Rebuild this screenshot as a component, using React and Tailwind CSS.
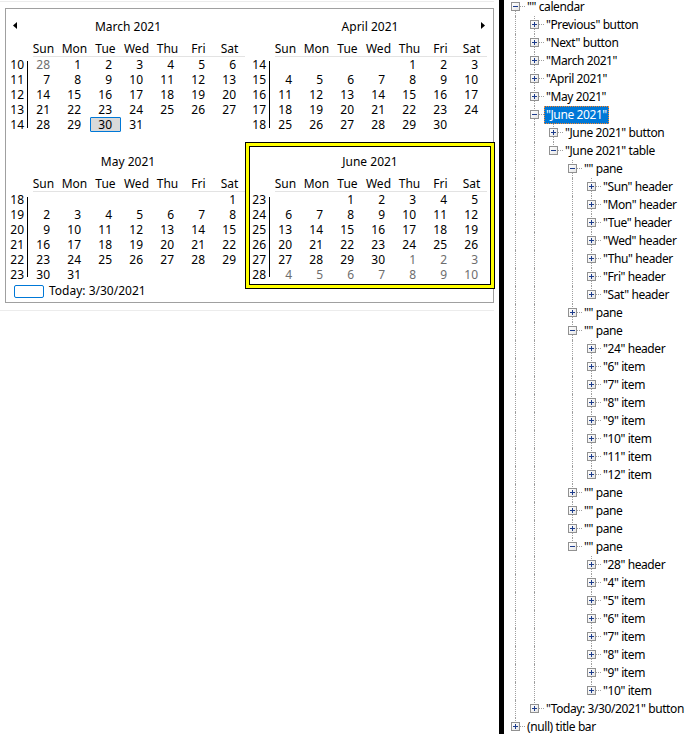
import React from "react";

// calendar data: [weekNo, [day, grey?, selected?]...]
const march = [
  [10, [[28, 1], [1], [2], [3], [4], [5], [6]]],
  [11, [[7], [8], [9], [10], [11], [12], [13]]],
  [12, [[14], [15], [16], [17], [18], [19], [20]]],
  [13, [[21], [22], [23], [24], [25], [26], [27]]],
  [14, [[28], [29], [30, 0, 1], [31], [], [], []]],
];
const april = [
  [14, [[], [], [], [], [1], [2], [3]]],
  [15, [[4], [5], [6], [7], [8], [9], [10]]],
  [16, [[11], [12], [13], [14], [15], [16], [17]]],
  [17, [[18], [19], [20], [21], [22], [23], [24]]],
  [18, [[25], [26], [27], [28], [29], [30], []]],
];
const may = [
  [18, [[], [], [], [], [], [], [1]]],
  [19, [[2], [3], [4], [5], [6], [7], [8]]],
  [20, [[9], [10], [11], [12], [13], [14], [15]]],
  [21, [[16], [17], [18], [19], [20], [21], [22]]],
  [22, [[23], [24], [25], [26], [27], [28], [29]]],
  [23, [[30], [31], [], [], [], [], []]],
];
const june = [
  [23, [[], [], [1], [2], [3], [4], [5]]],
  [24, [[6], [7], [8], [9], [10], [11], [12]]],
  [25, [[13], [14], [15], [16], [17], [18], [19]]],
  [26, [[20], [21], [22], [23], [24], [25], [26]]],
  [27, [[27], [28], [29], [30], [1, 1], [2, 1], [3, 1]]],
  [28, [[4, 1], [5, 1], [6, 1], [7, 1], [8, 1], [9, 1], [10, 1]]],
];
const dayNames = ["Sun", "Mon", "Tue", "Wed", "Thu", "Fri", "Sat"];

const LeftArrow = () => (
  <svg width="4" height="7" viewBox="0 0 4 7" className="-mt-[3px]">
    <polygon points="4,0 4,7 0,3.5" fill="#000" />
  </svg>
);
const RightArrow = () => (
  <svg width="4" height="7" viewBox="0 0 4 7" className="-mt-[3px]">
    <polygon points="0,0 0,7 4,3.5" fill="#000" />
  </svg>
);

const Month = ({ title, weeks, left, right }) => (
  <div className="w-[237px] flex flex-col">
    <div className="grid grid-cols-[1fr_auto_1fr] items-center h-[30px]">
      <div className="justify-self-start pl-[5px] flex">{left && <LeftArrow />}</div>
      <div className="pl-[3px]">{title}</div>
      <div className="justify-self-end pr-[2px] flex">{right && <RightArrow />}</div>
    </div>
    <div className="ml-[20px] h-[14px] leading-[14px] grid grid-cols-[repeat(7,31px)]">
      {dayNames.map((d) => (
        <div key={d} className="text-center">
          {d}
        </div>
      ))}
    </div>
    <div className="ml-[25px] h-px bg-[#e3e3e3]" />
    <div className="flex h-[90px]">
      <div className="w-[19px] flex flex-col text-right pr-[3px]">
        {weeks.map(([w]) => (
          <div key={w} className="h-[15px] leading-[15px]">
            {w}
          </div>
        ))}
      </div>
      <div
        className={
          weeks.length > 5
            ? "w-px bg-black self-start mt-[5px] h-[80px]"
            : "w-px bg-black self-start mt-[4px] h-[67px]"
        }
      />
      <div className="flex flex-col">
        {weeks.map(([w, days]) => (
          <div key={w} className="grid grid-cols-[repeat(7,31px)] h-[15px] leading-[15px]">
            {days.map(([n, grey, sel], i) => (
              <div
                key={i}
                className={
                  sel
                    ? "text-right pr-[8px] border border-[#0078d7] bg-[#d9d9d9] leading-[13px] rounded-[1px]"
                    : grey
                    ? "text-right pr-[9px] text-[#6d6d6d]"
                    : "text-right pr-[9px]"
                }
              >
                {n}
              </div>
            ))}
          </div>
        ))}
      </div>
    </div>
  </div>
);

const Calendar = () => (
  <div className="relative w-[489px] border border-[#a0a0a0] bg-white pt-[3px] pl-[2px] pb-[2px]">
    <div className="flex gap-[5px]">
      <Month title="March 2021" weeks={march} left />
      <Month title="April 2021" weeks={april} right />
    </div>
    <div className="flex gap-[5px]">
      <Month title="May 2021" weeks={may} />
      <Month title="June 2021" weeks={june} />
    </div>
    <div className="flex items-center h-[18px]">
      <div className="ml-[6px] w-[30px] h-[13px] rounded-[2px] border border-[#0078d7]" />
      <span className="ml-[5px]">Today: 3/30/2021</span>
    </div>
    {/* yellow highlight around June */}
    <div className="absolute left-[239px] top-[133px] w-[250px] h-[147px] border border-black">
      <div className="w-full h-full border-[3px] border-[#ffff00]">
        <div className="w-full h-full border border-black" />
      </div>
    </div>
  </div>
);

// tree data: [level, expanded(1)/collapsed(0), text, selected]
const tree = [
  [0, 1, '"" calendar'],
  [1, 0, '"Previous" button'],
  [1, 0, '"Next" button'],
  [1, 0, '"March 2021"'],
  [1, 0, '"April 2021"'],
  [1, 0, '"May 2021"'],
  [1, 1, '"June 2021"', 1],
  [2, 0, '"June 2021" button'],
  [2, 1, '"June 2021" table'],
  [3, 1, '"" pane'],
  ...dayNames.map((d) => [4, 0, `"${d}" header`]),
  [3, 0, '"" pane'],
  [3, 1, '"" pane'],
  [4, 0, '"24" header'],
  ...[6, 7, 8, 9, 10, 11, 12].map((n) => [4, 0, `"${n}" item`]),
  [3, 0, '"" pane'],
  [3, 0, '"" pane'],
  [3, 0, '"" pane'],
  [3, 1, '"" pane'],
  [4, 0, '"28" header'],
  ...[4, 5, 6, 7, 8, 9, 10].map((n) => [4, 0, `"${n}" item`]),
  [1, 0, '"Today: 3/30/2021" button'],
  [0, 0, "(null) title bar"],
];

const continues = (i, k) => {
  for (let j = i + 1; j < tree.length; j++) {
    if (tree[j][0] < k) return false;
    if (tree[j][0] === k) return true;
  }
  return false;
};

const Expander = ({ open }) => (
  <div className="absolute left-[5px] top-[4px] w-[9px] h-[9px] border border-[#919191] bg-gradient-to-br from-white to-[#e6e6e6]">
    <div className="absolute left-[1px] top-[3px] w-[5px] h-px bg-[#1c3c8c]" />
    {!open && <div className="absolute left-[3px] top-[1px] w-px h-[5px] bg-[#1c3c8c]" />}
  </div>
);

const TreeRow = ({ i }) => {
  const [level, open, text, selected] = tree[i];
  const up = level > 0 || i > 0;
  const down = continues(i, level);
  const guides = [];
  for (let k = 0; k < level; k++) {
    guides.push(
      <div key={k} className="relative w-[19px] h-[18px] shrink-0">
        {continues(i, k) && (
          <div className="absolute left-[9px] top-0 h-[18px] border-l border-dotted border-[#a0a0a0]" />
        )}
      </div>
    );
  }
  return (
    <div className="flex h-[18px] items-center">
      {guides}
      <div className="relative w-[19px] h-[18px] shrink-0">
        {up && <div className="absolute left-[9px] top-0 h-[9px] border-l border-dotted border-[#a0a0a0]" />}
        {down && <div className="absolute left-[9px] top-[9px] h-[9px] border-l border-dotted border-[#a0a0a0]" />}
        <div className="absolute left-[9px] top-[8px] w-[10px] border-t border-dotted border-[#a0a0a0]" />
        <Expander open={open} />
      </div>
      {selected ? (
        <span className="h-[18px] leading-[16px] px-[1px] bg-[#0078d7] text-white border border-dotted border-[#ff8728] whitespace-nowrap">
          {text}
        </span>
      ) : (
        <span className="ml-[2px] leading-[18px] whitespace-nowrap">{text}</span>
      )}
    </div>
  );
};

export default function App() {
  return (
    <div className="flex w-[691px] h-[734px] overflow-hidden bg-white text-black text-[12px] font-['Noto_Sans',sans-serif]">
      <div className="w-[499px] shrink-0">
        <div className="w-[494px] h-[310px] mt-[1px] border-y border-[#ececec] pt-[6px] pl-[5px]">
          <Calendar />
        </div>
      </div>
      <div className="w-[5px] shrink-0 bg-black" />
      <div className="flex-1 overflow-hidden pl-[2px] tracking-[-0.4px]">
        <div className="-mt-[2px]">
          {tree.map((_, i) => (
            <TreeRow key={i} i={i} />
          ))}
        </div>
      </div>
    </div>
  );
}
